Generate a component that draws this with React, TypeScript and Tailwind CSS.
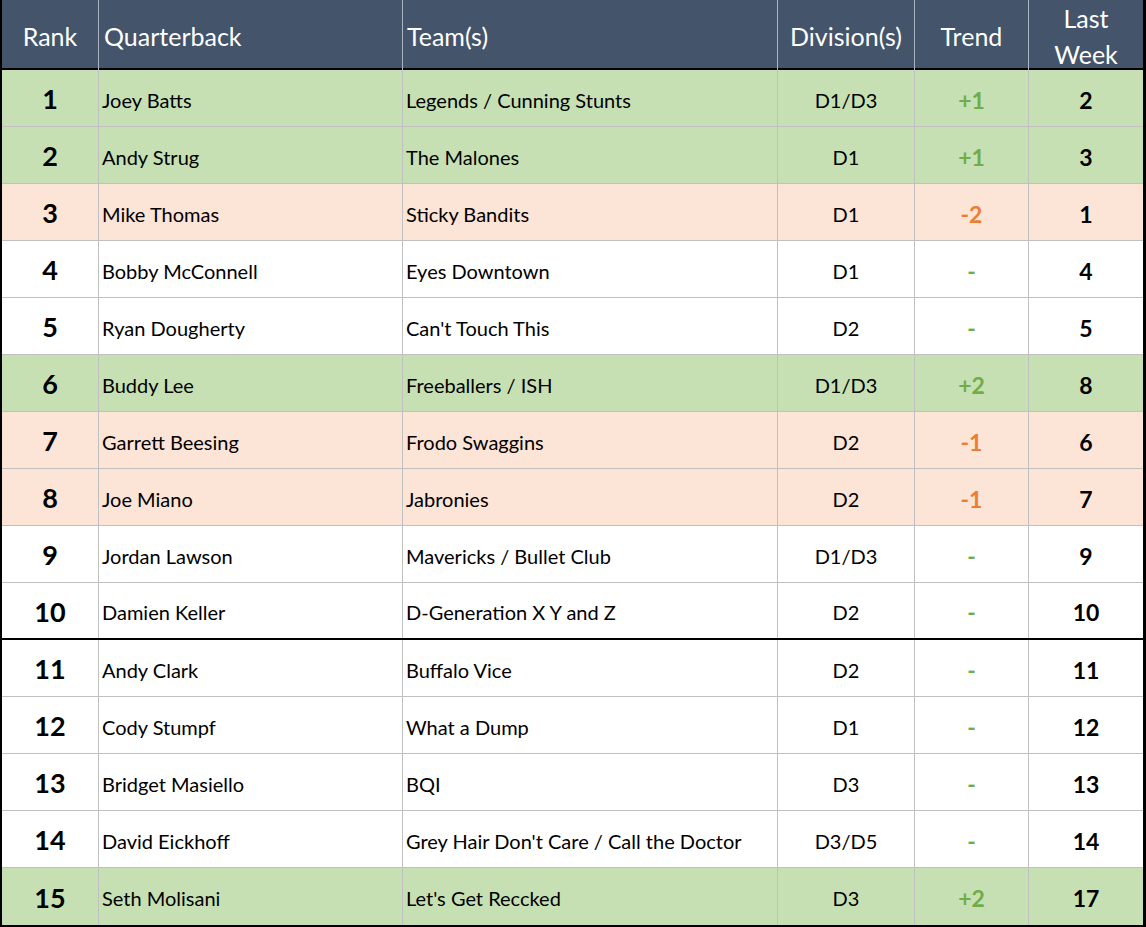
type Row = {
  rank: number;
  qb: string;
  team: string;
  div: string;
  trend: string;
  last: number;
  tone?: 'up' | 'down';
};

const rows: Row[] = [
  { rank: 1, qb: 'Joey Batts', team: 'Legends / Cunning Stunts', div: 'D1/D3', trend: '+1', last: 2, tone: 'up' },
  { rank: 2, qb: 'Andy Strug', team: 'The Malones', div: 'D1', trend: '+1', last: 3, tone: 'up' },
  { rank: 3, qb: 'Mike Thomas', team: 'Sticky Bandits', div: 'D1', trend: '-2', last: 1, tone: 'down' },
  { rank: 4, qb: 'Bobby McConnell', team: 'Eyes Downtown', div: 'D1', trend: '-', last: 4 },
  { rank: 5, qb: 'Ryan Dougherty', team: "Can't Touch This", div: 'D2', trend: '-', last: 5 },
  { rank: 6, qb: 'Buddy Lee', team: 'Freeballers / ISH', div: 'D1/D3', trend: '+2', last: 8, tone: 'up' },
  { rank: 7, qb: 'Garrett Beesing', team: 'Frodo Swaggins', div: 'D2', trend: '-1', last: 6, tone: 'down' },
  { rank: 8, qb: 'Joe Miano', team: 'Jabronies', div: 'D2', trend: '-1', last: 7, tone: 'down' },
  { rank: 9, qb: 'Jordan Lawson', team: 'Mavericks / Bullet Club', div: 'D1/D3', trend: '-', last: 9 },
  { rank: 10, qb: 'Damien Keller', team: 'D-Generation X Y and Z', div: 'D2', trend: '-', last: 10 },
  { rank: 11, qb: 'Andy Clark', team: 'Buffalo Vice', div: 'D2', trend: '-', last: 11 },
  { rank: 12, qb: 'Cody Stumpf', team: 'What a Dump', div: 'D1', trend: '-', last: 12 },
  { rank: 13, qb: 'Bridget Masiello', team: 'BQI', div: 'D3', trend: '-', last: 13 },
  { rank: 14, qb: 'David Eickhoff', team: "Grey Hair Don't Care / Call the Doctor", div: 'D3/D5', trend: '-', last: 14 },
  { rank: 15, qb: 'Seth Molisani', team: "Let's Get Reccked", div: 'D3', trend: '+2', last: 17, tone: 'up' },
];

const cols = 'grid grid-cols-[97px_304px_375px_137px_114px_114px]';

export default function App() {
  return (
    <div className="w-[1146px] h-[927px] bg-white font-['Lato','Open_Sans',sans-serif] text-black border-l-2 border-r-[3px] border-b-2 border-black">
      <div className={`${cols} h-[70px] bg-[#44546a] text-white text-[25px] border-b-2 border-black`}>
        <div className="flex items-center justify-center border-r border-[#aab4c2]">Rank</div>
        <div className="flex items-center pl-[5px] border-r border-[#aab4c2]">Quarterback</div>
        <div className="flex items-center pl-[4px] border-r border-[#aab4c2]">Team(s)</div>
        <div className="flex items-center justify-center border-r border-[#aab4c2]">Division(s)</div>
        <div className="flex items-center justify-center border-r border-[#aab4c2]">Trend</div>
        <div className="flex flex-col items-center justify-center leading-[36px] pb-[2px]">
          <span>Last</span>
          <span>Week</span>
        </div>
      </div>
      {rows.map((r, i) => {
        const bg = r.tone === 'up' ? 'bg-[#c6e0b4]' : r.tone === 'down' ? 'bg-[#fce4d6]' : 'bg-white';
        const line =
          i === rows.length - 1 ? '' : i === 9 ? 'border-b-2 border-black' : 'border-b border-[#c0c0c0]';
        const trendColor = r.tone === 'down' ? 'text-[#ed7d31]' : 'text-[#70ad47]';
        return (
          <div key={r.rank} className={`${cols} h-[57px] ${bg} ${line}`}>
            <div className="flex items-center justify-center pt-[3px] text-[27px] font-bold border-r border-[#c0c0c0]">
              {r.rank}
            </div>
            <div className="flex items-center pl-[3px] pt-[3px] text-[20px] border-r border-[#c0c0c0]">{r.qb}</div>
            <div className="flex items-center pl-[3px] pt-[3px] text-[20px] border-r border-[#c0c0c0]">{r.team}</div>
            <div className="flex items-center justify-center pt-[3px] text-[20px] border-r border-[#c0c0c0]">{r.div}</div>
            <div className={`flex items-center justify-center pt-[4px] text-[23px] font-bold ${trendColor} border-r border-[#c0c0c0]`}>
              {r.trend}
            </div>
            <div className="flex items-center justify-center pt-[4px] text-[23px] font-bold">{r.last}</div>
          </div>
        );
      })}
    </div>
  );
}
